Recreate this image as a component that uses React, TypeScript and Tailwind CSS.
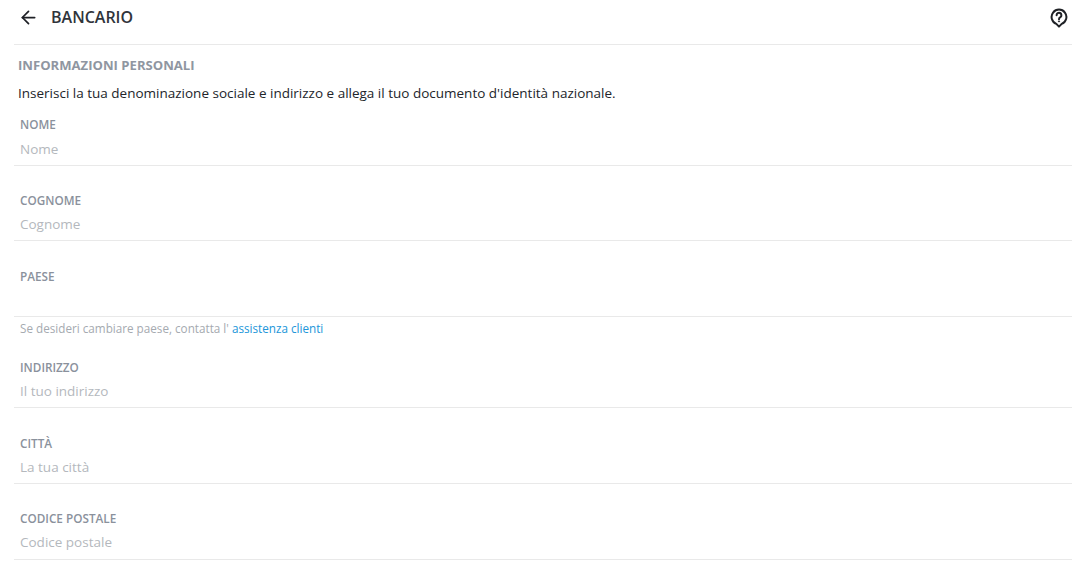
import { ArrowLeft } from "lucide-react"

function Field({
  label,
  placeholder,
  className = "",
  inputClass = "mt-[5px]",
}: {
  label: string
  placeholder?: string
  className?: string
  inputClass?: string
}) {
  return (
    <div className={`border-b border-[#e9e9e9] px-[6px] ${className}`}>
      <div className="text-[11.75px] leading-[16px] font-semibold text-[#8a919c]">{label}</div>
      <div className={`h-[22px] text-[13.5px] leading-[22px] text-[#b4b8bd] ${inputClass}`}>{placeholder}</div>
    </div>
  )
}

function HelpIcon() {
  return (
    <svg width="18" height="20" viewBox="0 0 18 20" fill="none" stroke="#1f2126" strokeWidth="2">
      <path d="M9 18.6 L6.3 15.9 A7.4 7.4 0 1 1 11.7 15.9 Z" strokeLinejoin="round" />
      <path d="M6.6 7.2 A2.4 2.4 0 1 1 10.4 9.1 C9.4 9.7 9 10.1 9 11.2" strokeLinecap="round" />
      <circle cx="9" cy="13.4" r="0.6" fill="#1f2126" strokeWidth="0.8" />
    </svg>
  )
}

export default function App() {
  return (
    <div className="h-[574px] w-[1092px] overflow-hidden bg-white pr-[20px] pl-[14px] font-['Open_Sans',sans-serif]">
      <header className="flex h-[45px] items-start justify-between border-b border-[#e9e9e9] pt-[6px]">
        <div className="flex items-center">
          <ArrowLeft className="ml-[4px] h-[21px] w-[21px] text-[#1f2126]" strokeWidth={2} />
          <span className="ml-[12px] text-[16px] leading-[22px] font-semibold text-[#30343b]">BANCARIO</span>
        </div>
        <div className="mt-[2px] mr-[4px]">
          <HelpIcon />
        </div>
      </header>

      <div className="px-[4px] pt-[11px]">
        <h2 className="text-[13.1px] leading-[18px] font-bold text-[#8f96a1]">INFORMAZIONI PERSONALI</h2>
        <p className="mt-[9px] text-[13.5px] leading-[20px] text-[#22252a]">
          Inserisci la tua denominazione sociale e indirizzo e allega il tuo documento d'identità nazionale.
        </p>
      </div>

      <Field label="NOME" placeholder="Nome" inputClass="mt-[6px]" className="mt-[13px] pb-[5px]" />
      <Field label="COGNOME" placeholder="Cognome" className="mt-[26px] pb-[5px]" />
      <Field label="PAESE" className="mt-[27px] pb-[5px]" />
      <p className="px-[6px] pt-[3px] text-[11.7px] leading-[16px] text-[#a5aab0]">
        Se desideri cambiare paese, contatta l'{" "}
        <a className="text-[#2196d9]">assistenza clienti</a>
      </p>
      <Field label="INDIRIZZO" placeholder="Il tuo indirizzo" className="mt-[23px] pb-[5px]" />
      <Field label="CITTÀ" placeholder="La tua città" className="mt-[27px] pb-[5px]" />
      <Field label="CODICE POSTALE" placeholder="Codice postale" className="mt-[26px] pb-[6px]" />
    </div>
  )
}
